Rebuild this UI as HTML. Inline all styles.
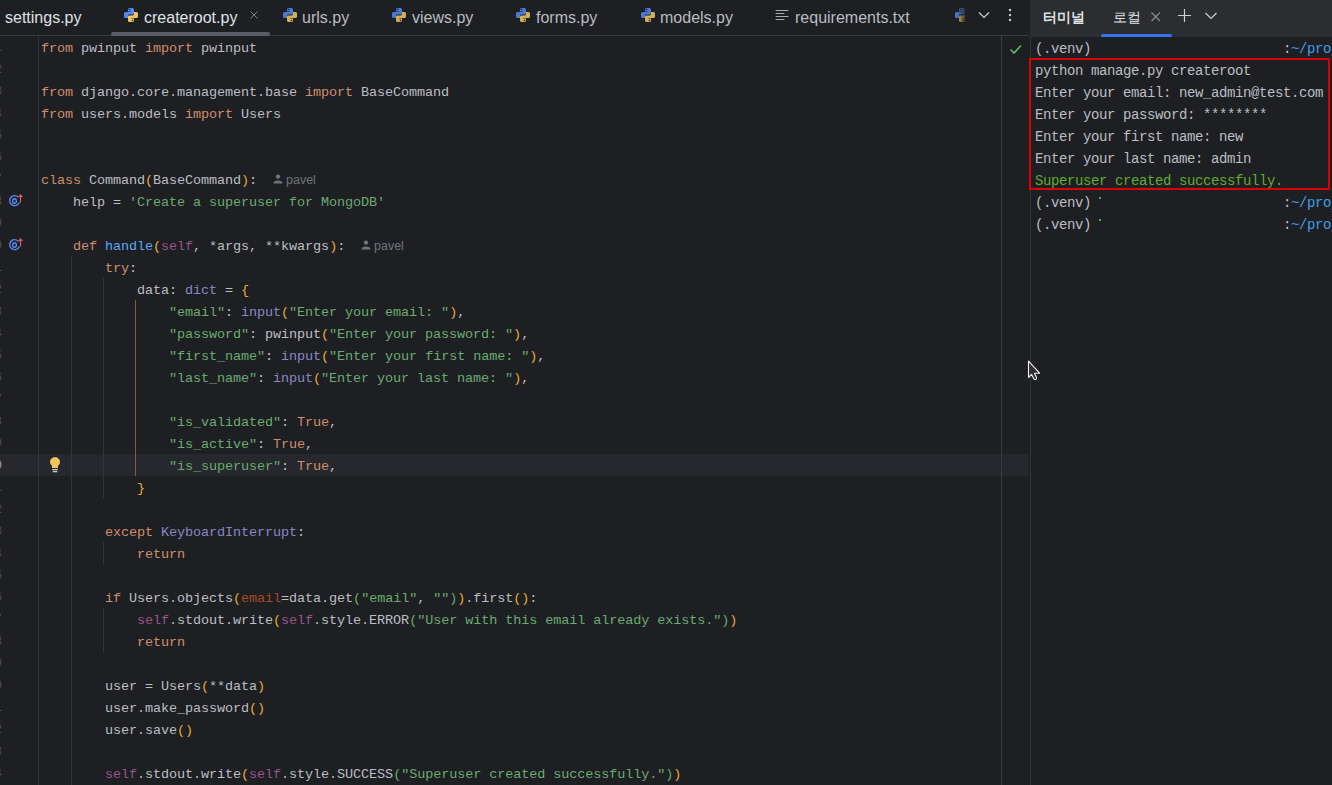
<!DOCTYPE html>
<html><head><meta charset="utf-8">
<style>
html,body{margin:0;padding:0;width:1332px;height:785px;overflow:hidden;background:#1E1F22}
body{position:relative}
.a{position:absolute}
.ui{font-family:"Liberation Sans",sans-serif;white-space:pre}
.ln{position:absolute;left:41px;height:22px;line-height:22px;white-space:pre;font-family:"Liberation Mono",monospace;font-size:13.5px;letter-spacing:-0.1px;color:#BCBEC4;padding-top:2px}
.k{color:#CF8E6D}.t{color:#BCBEC4}.s{color:#6AAB73}.b{color:#8888C6}.f{color:#56A8F5}.self{color:#94558D}.p{color:#AA4926}
.g1{color:#E1AC36}.g2{color:#5FAE6B}
.num{position:absolute;left:-22px;width:24px;text-align:right;height:22px;line-height:22px;font-family:"Liberation Mono",monospace;font-size:13px;color:#4B5059;padding-top:1px}
.num.cur{color:#A1A3AB}
.tab{position:absolute;top:0;height:35px;line-height:35px;font-family:"Liberation Sans",sans-serif;font-size:16px;color:#DFE1E5;white-space:pre}
.term{position:absolute;left:1035px;height:22px;line-height:22px;white-space:pre;font-family:"Liberation Mono",monospace;font-size:14px;letter-spacing:-0.4px;color:#BCBEC4;padding-top:2px}
.hint{position:absolute;height:22px;line-height:22px;font-family:"Liberation Sans",sans-serif;font-size:12.5px;color:#6F737A;white-space:pre}
</style></head>
<body>
<!-- editor tab bar -->
<div class="a" style="left:0;top:35px;width:1029px;height:1px;background:#393B40"></div>
<div class="a" style="left:111px;top:32px;width:159px;height:4px;border-radius:2px;background:#5A5D63"></div>
<div class="tab" style="left:5px">settings.py</div>
<svg class="a" style="left:123px;top:7px" width="16" height="16" viewBox="0 0 16 16"><g><path fill="#548AF7" d="M5 2.5Q5 1 6.5 1H9.5Q11 1 11 2.5V6.3Q11 7.6 9.7 7.6H6.3Q5 7.6 5 8.9V11H2.5Q1 11 1 9.5V6.5Q1 5 2.5 5H7.8V4.4H5Z"/><circle cx="6.6" cy="2.6" r="0.75" fill="#1E1F22"/><g transform="rotate(180 8 8)"><path fill="#F2C55C" d="M5 2.5Q5 1 6.5 1H9.5Q11 1 11 2.5V6.3Q11 7.6 9.7 7.6H6.3Q5 7.6 5 8.9V11H2.5Q1 11 1 9.5V6.5Q1 5 2.5 5H7.8V4.4H5Z"/><circle cx="6.6" cy="2.6" r="0.75" fill="#1E1F22"/></g></g></svg>
<div class="tab" style="left:144px">createroot.py</div>
<svg class="a" style="left:249px;top:10px" width="10" height="10" viewBox="0 0 10 10"><path d="M1.5 1.5L8.5 8.5M8.5 1.5L1.5 8.5" stroke="#8A8D94" stroke-width="0.9"/></svg>
<svg class="a" style="left:282px;top:7px" width="16" height="16" viewBox="0 0 16 16"><path fill="#4A7AD8" d="M5 2.5Q5 1 6.5 1H9.5Q11 1 11 2.5V6.3Q11 7.6 9.7 7.6H6.3Q5 7.6 5 8.9V11H2.5Q1 11 1 9.5V6.5Q1 5 2.5 5H7.8V4.4H5Z"/><circle cx="6.6" cy="2.6" r="0.75" fill="#1E1F22"/><g transform="rotate(180 8 8)"><path fill="#D4AE55" d="M5 2.5Q5 1 6.5 1H9.5Q11 1 11 2.5V6.3Q11 7.6 9.7 7.6H6.3Q5 7.6 5 8.9V11H2.5Q1 11 1 9.5V6.5Q1 5 2.5 5H7.8V4.4H5Z"/><circle cx="6.6" cy="2.6" r="0.75" fill="#1E1F22"/></g></svg>
<div class="tab" style="left:302px;color:#B9BCC3">urls.py</div>
<svg class="a" style="left:391px;top:7px" width="16" height="16" viewBox="0 0 16 16"><path fill="#4A7AD8" d="M5 2.5Q5 1 6.5 1H9.5Q11 1 11 2.5V6.3Q11 7.6 9.7 7.6H6.3Q5 7.6 5 8.9V11H2.5Q1 11 1 9.5V6.5Q1 5 2.5 5H7.8V4.4H5Z"/><circle cx="6.6" cy="2.6" r="0.75" fill="#1E1F22"/><g transform="rotate(180 8 8)"><path fill="#D4AE55" d="M5 2.5Q5 1 6.5 1H9.5Q11 1 11 2.5V6.3Q11 7.6 9.7 7.6H6.3Q5 7.6 5 8.9V11H2.5Q1 11 1 9.5V6.5Q1 5 2.5 5H7.8V4.4H5Z"/><circle cx="6.6" cy="2.6" r="0.75" fill="#1E1F22"/></g></svg>
<div class="tab" style="left:412px;color:#B9BCC3">views.py</div>
<svg class="a" style="left:515px;top:7px" width="16" height="16" viewBox="0 0 16 16"><path fill="#4A7AD8" d="M5 2.5Q5 1 6.5 1H9.5Q11 1 11 2.5V6.3Q11 7.6 9.7 7.6H6.3Q5 7.6 5 8.9V11H2.5Q1 11 1 9.5V6.5Q1 5 2.5 5H7.8V4.4H5Z"/><circle cx="6.6" cy="2.6" r="0.75" fill="#1E1F22"/><g transform="rotate(180 8 8)"><path fill="#D4AE55" d="M5 2.5Q5 1 6.5 1H9.5Q11 1 11 2.5V6.3Q11 7.6 9.7 7.6H6.3Q5 7.6 5 8.9V11H2.5Q1 11 1 9.5V6.5Q1 5 2.5 5H7.8V4.4H5Z"/><circle cx="6.6" cy="2.6" r="0.75" fill="#1E1F22"/></g></svg>
<div class="tab" style="left:536px;color:#B9BCC3">forms.py</div>
<svg class="a" style="left:640px;top:7px" width="16" height="16" viewBox="0 0 16 16"><path fill="#4A7AD8" d="M5 2.5Q5 1 6.5 1H9.5Q11 1 11 2.5V6.3Q11 7.6 9.7 7.6H6.3Q5 7.6 5 8.9V11H2.5Q1 11 1 9.5V6.5Q1 5 2.5 5H7.8V4.4H5Z"/><circle cx="6.6" cy="2.6" r="0.75" fill="#1E1F22"/><g transform="rotate(180 8 8)"><path fill="#D4AE55" d="M5 2.5Q5 1 6.5 1H9.5Q11 1 11 2.5V6.3Q11 7.6 9.7 7.6H6.3Q5 7.6 5 8.9V11H2.5Q1 11 1 9.5V6.5Q1 5 2.5 5H7.8V4.4H5Z"/><circle cx="6.6" cy="2.6" r="0.75" fill="#1E1F22"/></g></svg>
<div class="tab" style="left:660px;color:#B9BCC3">models.py</div>
<svg class="a" style="left:774px;top:6px" width="16" height="16" viewBox="0 0 16 16"><path d="M2 4.5H14M2 7.5H10M2 10.5H14M2 13.5H10" stroke="#A8ABB0" stroke-width="1.1" stroke-linecap="round"/></svg>
<div class="tab" style="left:795px;color:#B9BCC3">requirements.txt</div>
<div class="a" style="left:954px;top:7px;width:11px;height:16px;overflow:hidden;-webkit-mask-image:linear-gradient(90deg,#000 20%,rgba(0,0,0,0.25) 100%)"><svg style="display:block" width="16" height="16" viewBox="0 0 16 16"><path fill="#4A7AD8" d="M5 2.5Q5 1 6.5 1H9.5Q11 1 11 2.5V6.3Q11 7.6 9.7 7.6H6.3Q5 7.6 5 8.9V11H2.5Q1 11 1 9.5V6.5Q1 5 2.5 5H7.8V4.4H5Z"/><circle cx="6.6" cy="2.6" r="0.75" fill="#1E1F22"/><g transform="rotate(180 8 8)"><path fill="#D4AE55" d="M5 2.5Q5 1 6.5 1H9.5Q11 1 11 2.5V6.3Q11 7.6 9.7 7.6H6.3Q5 7.6 5 8.9V11H2.5Q1 11 1 9.5V6.5Q1 5 2.5 5H7.8V4.4H5Z"/><circle cx="6.6" cy="2.6" r="0.75" fill="#1E1F22"/></g></svg></div>
<svg class="a" style="left:977px;top:8px" width="14" height="14" viewBox="0 0 14 14"><path d="M2 4.5L7 9.5L12 4.5" fill="none" stroke="#CED0D6" stroke-width="1.2"/></svg>
<svg class="a" style="left:1007px;top:7px" width="6" height="16" viewBox="0 0 6 16"><circle cx="3" cy="3" r="1.2" fill="#CED0D6"/><circle cx="3" cy="8" r="1.2" fill="#CED0D6"/><circle cx="3" cy="13" r="1.2" fill="#CED0D6"/></svg>
<!-- editor body -->
<div class="a" style="left:0;top:454px;width:1029px;height:22px;background:#26282E"></div>
<div class="a" style="left:38px;top:36px;width:1px;height:749px;background:#313438"></div>
<div class="a" style="left:1001px;top:36px;width:1px;height:749px;background:#393B40"></div>
<div class="a" style="left:1030px;top:0;width:1px;height:785px;background:#323438"></div>
<div class="a" style="left:71px;top:256px;width:1px;height:529px;background:#313438"></div>
<div class="a" style="left:103px;top:278px;width:1px;height:220px;background:#313438"></div>
<div class="a" style="left:103px;top:542px;width:1px;height:22px;background:#313438"></div>
<div class="a" style="left:103px;top:608px;width:1px;height:44px;background:#313438"></div>
<div class="a" style="left:135px;top:300px;width:1px;height:176px;background:#7A6432"></div>
<svg class="a" style="left:8px;top:193px" width="18" height="14" viewBox="0 0 18 14"><path d="M10.3 4.2A5 5 0 1 0 11.3 9.5" fill="none" stroke="#548AF7" stroke-width="1.4"/><ellipse cx="6.5" cy="8" rx="1.9" ry="2.3" fill="none" stroke="#548AF7" stroke-width="1.4"/><path d="M12.5 9.5V2.2M10.6 4.2L12.5 2L14.4 4.2" fill="none" stroke="#E55B5B" stroke-width="1.2"/></svg>
<svg class="a" style="left:8px;top:237px" width="18" height="14" viewBox="0 0 18 14"><path d="M10.3 4.2A5 5 0 1 0 11.3 9.5" fill="none" stroke="#548AF7" stroke-width="1.4"/><ellipse cx="6.5" cy="8" rx="1.9" ry="2.3" fill="none" stroke="#548AF7" stroke-width="1.4"/><path d="M12.5 9.5V2.2M10.6 4.2L12.5 2L14.4 4.2" fill="none" stroke="#E55B5B" stroke-width="1.2"/></svg>
<svg class="a" style="left:48px;top:456px" width="14" height="18" viewBox="0 0 14 18"><path d="M7 1.2C4.2 1.2 2 3.3 2 6C2 7.8 3 8.9 4 9.8V12H10V9.8C11 8.9 12 7.8 12 6C12 3.3 9.8 1.2 7 1.2Z" fill="#F2C55C"/><rect x="4.2" y="13" width="5.6" height="1.3" rx="0.6" fill="#CED0D6"/><rect x="4.6" y="15" width="4.8" height="1.3" rx="0.6" fill="#CED0D6"/></svg>
<svg class="a" style="left:1008px;top:42px" width="16" height="14" viewBox="0 0 16 14"><path d="M2.5 7.5L6 11L13 3.5" fill="none" stroke="#5FB865" stroke-width="1.6"/></svg>
<svg class="a" style="left:272px;top:174px;margin-top:-1px" width="12" height="12" viewBox="0 0 12 12"><circle cx="6" cy="3.6" r="2.2" fill="#6F737A"/><path d="M1.5 10.5Q1.5 7.5 6 7.5Q10.5 7.5 10.5 10.5Z" fill="#6F737A"/></svg>
<div class="hint" style="left:286px;top:169px">pavel</div>
<svg class="a" style="left:360px;top:240px;margin-top:-1px" width="12" height="12" viewBox="0 0 12 12"><circle cx="6" cy="3.6" r="2.2" fill="#6F737A"/><path d="M1.5 10.5Q1.5 7.5 6 7.5Q10.5 7.5 10.5 10.5Z" fill="#6F737A"/></svg>
<div class="hint" style="left:374px;top:235px">pavel</div>
<div class="num" style="top:36px">1</div>
<div class="num" style="top:58px">2</div>
<div class="num" style="top:80px">3</div>
<div class="num" style="top:102px">4</div>
<div class="num" style="top:124px">5</div>
<div class="num" style="top:146px">6</div>
<div class="num" style="top:168px">7</div>
<div class="num" style="top:190px">8</div>
<div class="num" style="top:212px">9</div>
<div class="num" style="top:234px">10</div>
<div class="num" style="top:256px">11</div>
<div class="num" style="top:278px">12</div>
<div class="num" style="top:300px">13</div>
<div class="num" style="top:322px">14</div>
<div class="num" style="top:344px">15</div>
<div class="num" style="top:366px">16</div>
<div class="num" style="top:388px">17</div>
<div class="num" style="top:410px">18</div>
<div class="num" style="top:432px">19</div>
<div class="num cur" style="top:454px">20</div>
<div class="num" style="top:476px">21</div>
<div class="num" style="top:498px">22</div>
<div class="num" style="top:520px">23</div>
<div class="num" style="top:542px">24</div>
<div class="num" style="top:564px">25</div>
<div class="num" style="top:586px">26</div>
<div class="num" style="top:608px">27</div>
<div class="num" style="top:630px">28</div>
<div class="num" style="top:652px">29</div>
<div class="num" style="top:674px">30</div>
<div class="num" style="top:696px">31</div>
<div class="num" style="top:718px">32</div>
<div class="num" style="top:740px">33</div>
<div class="num" style="top:762px">34</div>
<div class="ln" style="top:36px"><span class="k">from</span><span class="t"> pwinput </span><span class="k">import</span><span class="t"> pwinput</span></div>
<div class="ln" style="top:58px"></div>
<div class="ln" style="top:80px"><span class="k">from</span><span class="t"> django.core.management.base </span><span class="k">import</span><span class="t"> BaseCommand</span></div>
<div class="ln" style="top:102px"><span class="k">from</span><span class="t"> users.models </span><span class="k">import</span><span class="t"> Users</span></div>
<div class="ln" style="top:124px"></div>
<div class="ln" style="top:146px"></div>
<div class="ln" style="top:168px"><span class="k">class</span><span class="t"> Command</span><span class="g1">(</span><span class="t">BaseCommand</span><span class="g1">)</span><span class="t">:</span></div>
<div class="ln" style="top:190px"><span class="t">    help = </span><span class="s">&#x27;Create a superuser for MongoDB&#x27;</span></div>
<div class="ln" style="top:212px"></div>
<div class="ln" style="top:234px"><span class="t">    </span><span class="k">def</span><span class="t"> </span><span class="f">handle</span><span class="g1">(</span><span class="self">self</span><span class="t">, *args, **kwargs</span><span class="g1">)</span><span class="t">:</span></div>
<div class="ln" style="top:256px"><span class="t">        </span><span class="k">try</span><span class="t">:</span></div>
<div class="ln" style="top:278px"><span class="t">            data: </span><span class="b">dict</span><span class="t"> = </span><span class="g1">{</span></div>
<div class="ln" style="top:300px"><span class="t">                </span><span class="s">&quot;email&quot;</span><span class="t">: </span><span class="b">input</span><span class="g1">(</span><span class="s">&quot;Enter your email: &quot;</span><span class="g1">)</span><span class="t">,</span></div>
<div class="ln" style="top:322px"><span class="t">                </span><span class="s">&quot;password&quot;</span><span class="t">: pwinput</span><span class="g1">(</span><span class="s">&quot;Enter your password: &quot;</span><span class="g1">)</span><span class="t">,</span></div>
<div class="ln" style="top:344px"><span class="t">                </span><span class="s">&quot;first_name&quot;</span><span class="t">: </span><span class="b">input</span><span class="g1">(</span><span class="s">&quot;Enter your first name: &quot;</span><span class="g1">)</span><span class="t">,</span></div>
<div class="ln" style="top:366px"><span class="t">                </span><span class="s">&quot;last_name&quot;</span><span class="t">: </span><span class="b">input</span><span class="g1">(</span><span class="s">&quot;Enter your last name: &quot;</span><span class="g1">)</span><span class="t">,</span></div>
<div class="ln" style="top:388px"></div>
<div class="ln" style="top:410px"><span class="t">                </span><span class="s">&quot;is_validated&quot;</span><span class="t">: </span><span class="k">True</span><span class="t">,</span></div>
<div class="ln" style="top:432px"><span class="t">                </span><span class="s">&quot;is_active&quot;</span><span class="t">: </span><span class="k">True</span><span class="t">,</span></div>
<div class="ln" style="top:454px"><span class="t">                </span><span class="s">&quot;is_superuser&quot;</span><span class="t">: </span><span class="k">True</span><span class="t">,</span></div>
<div class="ln" style="top:476px"><span class="t">            </span><span class="g1">}</span></div>
<div class="ln" style="top:498px"></div>
<div class="ln" style="top:520px"><span class="t">        </span><span class="k">except</span><span class="t"> </span><span class="b">KeyboardInterrupt</span><span class="t">:</span></div>
<div class="ln" style="top:542px"><span class="t">            </span><span class="k">return</span></div>
<div class="ln" style="top:564px"></div>
<div class="ln" style="top:586px"><span class="t">        </span><span class="k">if</span><span class="t"> Users.objects</span><span class="g1">(</span><span class="p">email</span><span class="t">=data.get</span><span class="g2">(</span><span class="s">&quot;email&quot;</span><span class="t">, </span><span class="s">&quot;&quot;</span><span class="g2">)</span><span class="g1">)</span><span class="t">.first</span><span class="g1">()</span><span class="t">:</span></div>
<div class="ln" style="top:608px"><span class="t">            </span><span class="self">self</span><span class="t">.stdout.write</span><span class="g1">(</span><span class="self">self</span><span class="t">.style.ERROR</span><span class="g2">(</span><span class="s">&quot;User with this email already exists.&quot;</span><span class="g2">)</span><span class="g1">)</span></div>
<div class="ln" style="top:630px"><span class="t">            </span><span class="k">return</span></div>
<div class="ln" style="top:652px"></div>
<div class="ln" style="top:674px"><span class="t">        user = Users</span><span class="g1">(</span><span class="t">**data</span><span class="g1">)</span></div>
<div class="ln" style="top:696px"><span class="t">        user.make_password</span><span class="g1">()</span></div>
<div class="ln" style="top:718px"><span class="t">        user.save</span><span class="g1">()</span></div>
<div class="ln" style="top:740px"></div>
<div class="ln" style="top:762px"><span class="t">        </span><span class="self">self</span><span class="t">.stdout.write</span><span class="g1">(</span><span class="self">self</span><span class="t">.style.SUCCESS</span><span class="g2">(</span><span class="s">&quot;Superuser created successfully.&quot;</span><span class="g2">)</span><span class="g1">)</span></div>
<!-- terminal -->
<div class="a" style="left:1030px;top:0;width:302px;height:37px;background:#2B2D30"></div>
<div class="ui a" style="left:1043px;top:0;height:37px;line-height:35px;font-size:14px;font-weight:bold;color:#DFE1E5">터미널</div>
<div class="ui a" style="left:1113px;top:0;height:37px;line-height:35px;font-size:14px;color:#DFE1E5">로컬</div>
<svg class="a" style="left:1150px;top:11px" width="12" height="12" viewBox="0 0 12 12"><path d="M1.5 1.5L10 10M10 1.5L1.5 10" stroke="#8C8F96" stroke-width="1.1"/></svg>
<div class="a" style="left:1101px;top:34px;width:71px;height:3px;border-radius:1.5px;background:#3574F0"></div>
<svg class="a" style="left:1177px;top:8px" width="15" height="15" viewBox="0 0 15 15"><path d="M7.5 1V14M1 7.5H14" stroke="#CED0D6" stroke-width="1.2"/></svg>
<svg class="a" style="left:1204px;top:10px" width="14" height="12" viewBox="0 0 14 12"><path d="M1.5 3L7 8.5L12.5 3" fill="none" stroke="#CED0D6" stroke-width="1.2"/></svg>
<div class="term" style="top:36px">(.venv)</div>
<div class="term" style="top:58px">python manage.py createroot</div>
<div class="term" style="top:80px">Enter your email: new_admin@test.com</div>
<div class="term" style="top:102px">Enter your password: ********</div>
<div class="term" style="top:124px">Enter your first name: new</div>
<div class="term" style="top:146px">Enter your last name: admin</div>
<div class="term" style="top:168px;color:#5FAD2F">Superuser created successfully.</div>
<div class="term" style="top:190px">(.venv)</div>
<div class="term" style="top:212px">(.venv)</div>
<div class="term" style="left:1283px;top:36px"><span style="color:#BCBEC4">:</span><span style="color:#3B9FE8">~/proj</span></div>
<div class="term" style="left:1283px;top:190px"><span style="color:#BCBEC4">:</span><span style="color:#3B9FE8">~/proj</span></div>
<div class="term" style="left:1283px;top:212px"><span style="color:#BCBEC4">:</span><span style="color:#3B9FE8">~/proj</span></div>
<div class="a" style="left:1029px;top:58px;width:297px;height:128px;border:2px solid #DC0000"></div>
<svg class="a" style="left:1027px;top:360px" width="16" height="22" viewBox="0 0 16 22"><path d="M1.5 1.2V17.5L4.5 14.3L6.8 18.8Q7.6 20 8.9 19.3Q10 18.6 9.4 17.3L7.4 13.2H12.6Z" fill="#2E2E30" stroke="#F4F4F4" stroke-width="1.1" stroke-linejoin="round"/></svg>
<div class="a" style="left:1099px;top:197px;width:2px;height:2px;background:#4FAF3A"></div><div class="a" style="left:1099px;top:219px;width:2px;height:2px;background:#4FAF3A"></div>
</body></html>
